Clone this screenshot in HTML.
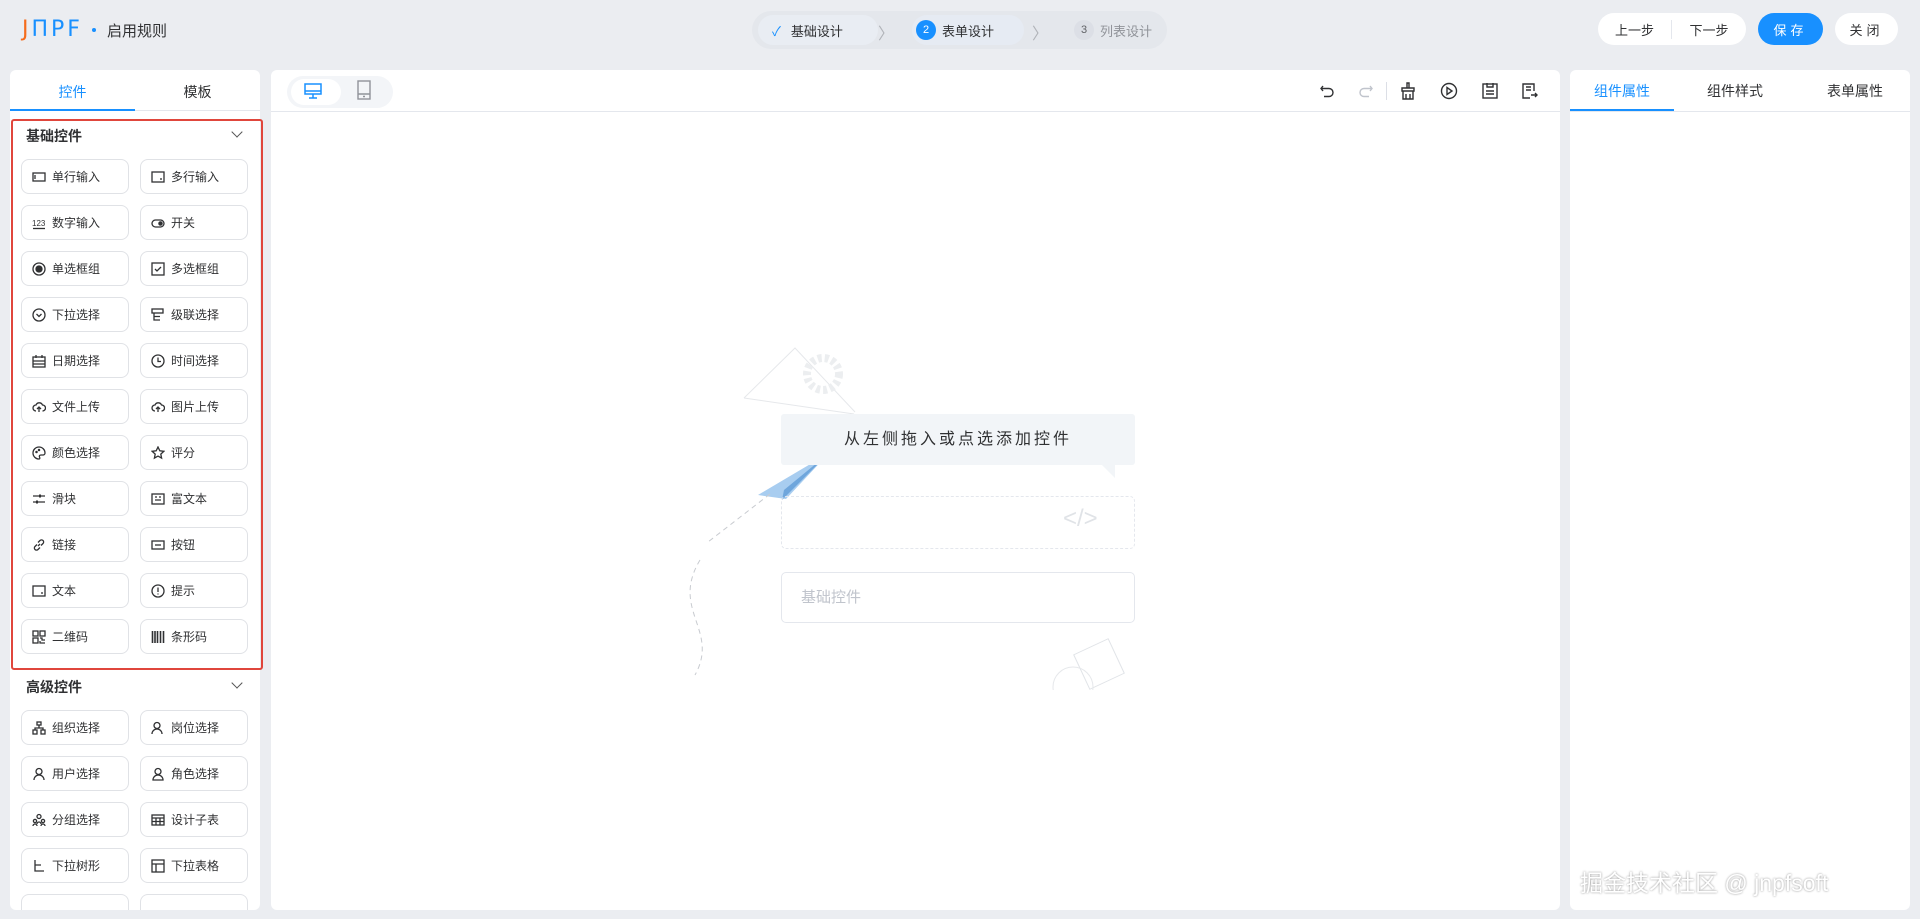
<!DOCTYPE html>
<html><head><meta charset="utf-8">
<style>
*{box-sizing:border-box;margin:0;padding:0}
body{width:1920px;height:919px;background:#ebedf1;font-family:"Liberation Sans","Noto Sans CJK SC",sans-serif;color:#303133;position:relative;overflow:hidden}
.abs{position:absolute}
.logo{left:22px;top:17px;font:22px "DejaVu Sans",sans-serif;letter-spacing:3px;color:#1890ff}
.title{left:107px;top:20px;font-size:15px;color:#303133}
.steps{left:752px;top:11px;width:415px;height:38px;background:#e4e7ec;border-radius:19px;font-size:13px}
.step{position:absolute;top:4px;height:30px;border-radius:15px;display:flex;align-items:center}
.circ{width:20px;height:20px;border-radius:50%;display:inline-flex;align-items:center;justify-content:center;font-size:11px;margin-right:6px}
.btns{top:13px;height:32px;background:#fff;border-radius:16px;display:flex;align-items:center;font-size:13px}
.panel{background:#fff;border-radius:6px}
.cbtn{position:absolute;width:108px;height:35px;border:1px solid #e0e2e6;border-radius:8px;font-size:12px;display:flex;align-items:center;padding-left:10px;color:#303133;background:#fff}
.cbtn svg{width:14px;height:14px;margin-right:6px;stroke:#303133;fill:none;stroke-width:1.3}
.sec{position:absolute;left:26px;font-size:14px;font-weight:bold}
.chev{position:absolute;left:233px;width:8px;height:8px;border-right:1.3px solid #555;border-bottom:1.3px solid #555;transform:rotate(45deg)}
.tb svg{position:absolute;top:82px;width:18px;height:18px;stroke:#303133;fill:none;stroke-width:1.4}
</style></head><body>
<div class="abs logo"><span style="color:#f56c1c">J</span>ΠPF</div>
<div class="abs" style="left:92px;top:28px;width:4px;height:4px;border-radius:50%;background:#1890ff"></div>
<div class="abs title">启用规则</div>

<div class="abs steps">
 <div class="step" style="left:6px;width:120px;padding-left:14px;background:#e9edf3"><span style="color:#1890ff;margin-right:10px">✓</span>基础设计</div>
 <div class="abs" style="left:126px;top:9px;color:#b0b3b8;font-size:16px">〉</div>
 <div class="step" style="left:160px;width:112px;padding-left:4px;background:#e6ebf3"><span class="circ" style="background:#1890ff;color:#fff">2</span>表单设计</div>
 <div class="abs" style="left:280px;top:9px;color:#b0b3b8;font-size:16px">〉</div>
 <div class="step" style="left:322px;padding-left:0;color:#909399"><span class="circ" style="background:#dcdfe6;color:#606266">3</span>列表设计</div>
</div>

<div class="abs btns" style="left:1598px;width:148px"><span style="width:74px;text-align:center;border-right:1px solid #e4e7ed">上一步</span><span style="width:74px;text-align:center">下一步</span></div>
<div class="abs btns" style="left:1758px;width:65px;background:#1890ff;color:#fff;justify-content:center;letter-spacing:4px">保存</div>
<div class="abs btns" style="left:1835px;width:63px;justify-content:center;letter-spacing:4px">关闭</div>

<div class="abs panel" style="left:10px;top:70px;width:250px;height:840px;overflow:hidden">
 <div class="abs" style="left:0;top:0;width:250px;height:41px;border-bottom:1px solid #e4e7ed"></div>
 <div class="abs" style="left:0;top:12px;width:125px;text-align:center;font-size:14px;color:#1890ff">控件</div>
 <div class="abs" style="left:125px;top:12px;width:125px;text-align:center;font-size:14px">模板</div>
 <div class="abs" style="left:0;top:39px;width:125px;height:2px;background:#1890ff"></div>
</div>
<div class="abs" style="left:11px;top:119px;width:252px;height:551px;border:2px solid #e0463c;border-radius:3px"></div>
<div class="sec" style="top:126px">基础控件</div><div class="chev" style="top:128px"></div>
<div class="sec" style="top:677px">高级控件</div><div class="chev" style="top:679px"></div>

<div class="cbtn" style="left:21px;top:159px"><svg viewBox="0 0 14 14"><rect x="1" y="3" width="12" height="8"/><path d="M3 5v4"/></svg>单行输入</div>
<div class="cbtn" style="left:140px;top:159px"><svg viewBox="0 0 14 14"><rect x="1" y="2" width="12" height="10"/><path d="M10 8v2"/></svg>多行输入</div>
<div class="cbtn" style="left:21px;top:205px"><svg viewBox="0 0 14 14"><text x="0" y="10" font-size="8" fill="#303133" stroke="none">123</text><path d="M1 12.5h12"/></svg>数字输入</div>
<div class="cbtn" style="left:140px;top:205px"><svg viewBox="0 0 14 14"><rect x="1" y="4" width="12" height="7" rx="3.5"/><circle cx="9.5" cy="7.5" r="1.6" fill="#303133"/></svg>开关</div>
<div class="cbtn" style="left:21px;top:251px"><svg viewBox="0 0 14 14"><circle cx="7" cy="7" r="6"/><circle cx="7" cy="7" r="3" fill="#303133"/></svg>单选框组</div>
<div class="cbtn" style="left:140px;top:251px"><svg viewBox="0 0 14 14"><rect x="1" y="1" width="12" height="12"/><path d="M4 7l2 2 4-4"/></svg>多选框组</div>
<div class="cbtn" style="left:21px;top:297px"><svg viewBox="0 0 14 14"><circle cx="7" cy="7" r="6"/><path d="M4.5 6l2.5 2.5 2.5-2.5"/></svg>下拉选择</div>
<div class="cbtn" style="left:140px;top:297px"><svg viewBox="0 0 14 14"><rect x="1" y="1" width="11" height="4"/><path d="M3 5v7h6M3 8.5h6"/></svg>级联选择</div>
<div class="cbtn" style="left:21px;top:343px"><svg viewBox="0 0 14 14"><rect x="1" y="3" width="12" height="10"/><path d="M4 1v3M10 1v3M1 7h12M1 10h12"/></svg>日期选择</div>
<div class="cbtn" style="left:140px;top:343px"><svg viewBox="0 0 14 14"><circle cx="7" cy="7" r="6"/><path d="M7 3.5v4h3"/></svg>时间选择</div>
<div class="cbtn" style="left:21px;top:389px"><svg viewBox="0 0 14 14"><path d="M4 11a3 3 0 010-6 3.5 3.5 0 016.5 0 3 3 0 010 6M7 12V7M5 9l2-2 2 2"/></svg>文件上传</div>
<div class="cbtn" style="left:140px;top:389px"><svg viewBox="0 0 14 14"><path d="M4 11a3 3 0 010-6 3.5 3.5 0 016.5 0 3 3 0 010 6M7 12V7M5 9l2-2 2 2"/></svg>图片上传</div>
<div class="cbtn" style="left:21px;top:435px"><svg viewBox="0 0 14 14"><path d="M7 1a6 6 0 100 12c1 0 1-1 .5-2s0-2 1.5-2H11a2 2 0 002-2A6 6 0 007 1z"/><circle cx="4.5" cy="6" r=".6"/><circle cx="7" cy="4" r=".6"/></svg>颜色选择</div>
<div class="cbtn" style="left:140px;top:435px"><svg viewBox="0 0 14 14"><path d="M7 1l1.8 3.8 4 .5-3 2.8.8 4L7 10.1 3.4 12.1l.8-4-3-2.8 4-.5z"/></svg>评分</div>
<div class="cbtn" style="left:21px;top:481px"><svg viewBox="0 0 14 14"><path d="M1 4h12M1 10h12"/><path d="M8 2.5v3M5 8.5v3" stroke-width="2"/></svg>滑块</div>
<div class="cbtn" style="left:140px;top:481px"><svg viewBox="0 0 14 14"><rect x="1" y="2" width="12" height="10"/><path d="M4 5h2M8 5h2M4 8h6"/></svg>富文本</div>
<div class="cbtn" style="left:21px;top:527px"><svg viewBox="0 0 14 14"><path d="M6 8l2-2M5 6.5L3 8.5a2 2 0 003 3L8 9.5M9 7.5l2-2a2 2 0 00-3-3L6 4.5"/></svg>链接</div>
<div class="cbtn" style="left:140px;top:527px"><svg viewBox="0 0 14 14"><rect x="1" y="3" width="12" height="8"/><path d="M4 7h6"/></svg>按钮</div>
<div class="cbtn" style="left:21px;top:573px"><svg viewBox="0 0 14 14"><rect x="1" y="2" width="12" height="10"/><path d="M10 8v2"/></svg>文本</div>
<div class="cbtn" style="left:140px;top:573px"><svg viewBox="0 0 14 14"><circle cx="7" cy="7" r="6"/><path d="M7 3.5v4.5M7 9.5v1"/></svg>提示</div>
<div class="cbtn" style="left:21px;top:619px"><svg viewBox="0 0 14 14"><rect x="1" y="1" width="5" height="5"/><rect x="8" y="1" width="5" height="5"/><rect x="1" y="8" width="5" height="5"/><path d="M8 8h2v2h3M8 11v2h5"/></svg>二维码</div>
<div class="cbtn" style="left:140px;top:619px"><svg viewBox="0 0 14 14"><path d="M1.5 1v12M4 1v12M6.5 1v12M9.5 1v12M12.5 1v12" stroke-width="1.6"/></svg>条形码</div>

<div class="cbtn" style="left:21px;top:710px"><svg viewBox="0 0 14 14"><rect x="5" y="1" width="4" height="3"/><rect x="1" y="9" width="4" height="4"/><rect x="9" y="9" width="4" height="4"/><path d="M7 4v3M3 9V7h8v2"/></svg>组织选择</div>
<div class="cbtn" style="left:140px;top:710px"><svg viewBox="0 0 14 14"><circle cx="6" cy="4.5" r="3"/><path d="M1 13a5 5 0 0110 0"/></svg>岗位选择</div>
<div class="cbtn" style="left:21px;top:756px"><svg viewBox="0 0 14 14"><circle cx="7" cy="4.5" r="3"/><path d="M2 13a5 5 0 0110 0"/></svg>用户选择</div>
<div class="cbtn" style="left:140px;top:756px"><svg viewBox="0 0 14 14"><circle cx="7" cy="4.5" r="3"/><path d="M2 13a5 5 0 0110 0z"/></svg>角色选择</div>
<div class="cbtn" style="left:21px;top:802px"><svg viewBox="0 0 14 14"><circle cx="7" cy="3.5" r="2"/><circle cx="3" cy="8" r="1.6"/><circle cx="11" cy="8" r="1.6"/><path d="M1 13a2 2 0 014 0M9 13a2 2 0 014 0M5 11a2 2 0 014 0"/></svg>分组选择</div>
<div class="cbtn" style="left:140px;top:802px"><svg viewBox="0 0 14 14"><rect x="1" y="2" width="12" height="10"/><path d="M1 5h12M1 8.5h12M5 5v7M9 5v7"/></svg>设计子表</div>
<div class="cbtn" style="left:21px;top:848px"><svg viewBox="0 0 14 14"><path d="M3 1v11h9M3 6h6"/></svg>下拉树形</div>
<div class="cbtn" style="left:140px;top:848px"><svg viewBox="0 0 14 14"><rect x="1" y="1" width="12" height="12"/><path d="M1 5h12M5 5v8"/></svg>下拉表格</div>
<div class="cbtn" style="left:21px;top:894px;height:16px;border-bottom:none;border-radius:8px 8px 0 0"></div>
<div class="cbtn" style="left:140px;top:894px;height:16px;border-bottom:none;border-radius:8px 8px 0 0"></div>

<div class="abs panel" style="left:271px;top:70px;width:1289px;height:840px"></div>
<div class="abs" style="left:271px;top:111px;width:1289px;height:1px;background:#e4e7ed"></div>
<div class="abs" style="left:287px;top:76px;width:106px;height:32px;background:#f3f5f8;border-radius:16px"></div>
<div class="abs" style="left:291px;top:79px;width:50px;height:26px;background:#fff;border-radius:13px"></div>
<svg class="abs" style="left:303px;top:82px" width="20" height="18" viewBox="0 0 20 18" fill="none" stroke="#1890ff" stroke-width="1.5"><rect x="2" y="2" width="16" height="10"/><path d="M2 9h16M10 12v4M6 16h8"/></svg>
<svg class="abs" style="left:357px;top:80px" width="14" height="20" viewBox="0 0 14 20" fill="none" stroke="#909399" stroke-width="1.4"><rect x="1" y="1" width="12" height="18"/><path d="M1 14h12M6 16.5h2"/></svg>
<div class="tb">
<svg style="left:1318px" viewBox="0 0 18 18"><path d="M5 4L3 6.5 5 9M3 6.5h8a4 4 0 010 8H6"/></svg>
<svg style="left:1357px;stroke:#c0c4cc" viewBox="0 0 18 18"><path d="M13 4l2 2.5L13 9M15 6.5H7a4 4 0 000 8h5"/></svg>
<div class="abs" style="left:1386px;top:82px;width:1px;height:18px;background:#dcdfe6"></div>
<svg style="left:1399px" viewBox="0 0 18 18"><path d="M8 1h2v5H8zM3 6h12v3H3zM4 9v8h10V9M7 12v5M11 12v5"/></svg>
<svg style="left:1440px" viewBox="0 0 18 18"><circle cx="9" cy="9" r="7.5"/><path d="M7 5.5v7l5-3.5z"/></svg>
<svg style="left:1481px" viewBox="0 0 18 18"><rect x="2" y="2" width="14" height="14"/><path d="M6 1v4h6V1M5 9h8M5 12h8"/></svg>
<svg style="left:1520px" viewBox="0 0 18 18"><path d="M14 9V2H3v14h7M6 5h5M6 8h5M11 13h6M15 11l2 2-2 2"/></svg>
</div>

<svg class="abs" style="left:680px;top:330px" width="480" height="360" viewBox="0 0 480 360" fill="none">
 <path d="M64 68L115 18 175 82" stroke="#e6e8eb"/><path d="M64 68l110 16" stroke="#e6e8eb"/>
 <circle cx="143" cy="44" r="16" stroke="#eceef0" stroke-width="8" stroke-dasharray="4 3"/>
 <path d="M78 165L149 123 106 169z" fill="#a8cdf0"/><path d="M104 160L149 123 102 170z" fill="#6fa6dc"/>
 <path d="M90 164L28 212M20 230C-10 280 40 300 15 345" stroke="#c8cbd0" stroke-dasharray="5 4"/>
 <rect x="400" y="315" width="38" height="38" transform="rotate(-25 419 334)" stroke="#e1e4e8"/>
 <circle cx="393" cy="357" r="20" stroke="#e6e8eb"/>
</svg>
<div class="abs" style="left:781px;top:414px;width:354px;height:51px;background:#f2f5f8;border-radius:3px;text-align:center;font-size:16px;letter-spacing:3px;line-height:51px;color:#303133;padding-left:0">从左侧拖入或点选添加控件</div>
<div class="abs" style="left:1101px;top:464px;width:0;height:0;border-top:14px solid #f2f5f8;border-left:14px solid transparent"></div>
<div class="abs" style="left:781px;top:496px;width:354px;height:53px;border:1.5px dashed #e4e7ed;border-radius:5px"></div>
<div class="abs" style="left:1063px;top:505px;font-size:24px;color:#e0e3e7">&lt;/&gt;</div>
<div class="abs" style="left:781px;top:572px;width:354px;height:51px;border:1px solid #e4e7ed;border-radius:5px;font-size:15px;color:#c0c4cc;line-height:49px;padding-left:19px">基础控件</div>

<div class="abs panel" style="left:1570px;top:70px;width:340px;height:840px"></div>
<div class="abs" style="left:1570px;top:111px;width:340px;height:1px;background:#e4e7ed"></div>
<div class="abs" style="left:1570px;top:81px;width:104px;text-align:center;font-size:14px;color:#1890ff">组件属性</div>
<div class="abs" style="left:1570px;top:109px;width:104px;height:2px;background:#1890ff"></div>
<div class="abs" style="left:1680px;top:81px;width:110px;text-align:center;font-size:14px">组件样式</div>
<div class="abs" style="left:1800px;top:81px;width:110px;text-align:center;font-size:14px">表单属性</div>

<div class="abs" style="left:1580px;top:864px;font-size:23px;color:#fff;text-shadow:0 0 2px rgba(0,0,0,.45)">掘金技术社区 @ jnpfsoft</div>
</body></html>
